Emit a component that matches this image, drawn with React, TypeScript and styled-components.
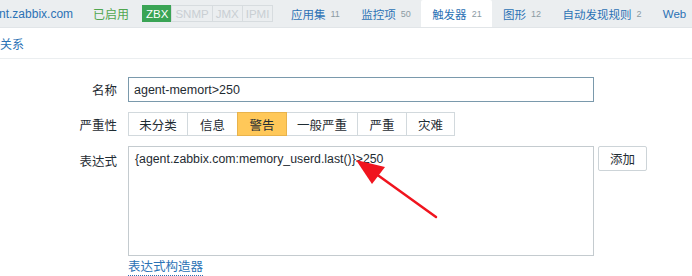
import React from 'react'
import styled, { createGlobalStyle } from 'styled-components'

const GlobalStyle = createGlobalStyle`
    html, body {
        margin: 0;
        padding: 0;
        background: #ffffff;
        overflow: hidden;
    }
    body {
        font-family: "Liberation Sans", Arial, "Noto Sans CJK SC", sans-serif;
        font-size: 12px;
        color: #1f2c33;
    }
`

const Page = styled.div`
    position: relative;
    width: 692px;
    height: 276px;
    overflow: hidden;
`

const HostBar = styled.div`
    display: flex;
    align-items: stretch;
    height: 27px;
    background: #ebeef0;
    border-bottom: 1px solid #e1e5e8;
    white-space: nowrap;
`

const HostName = styled.a`
    display: flex;
    align-items: center;
    margin-left: -21px;
    color: #2b72b5;
    font-size: 12px;
    text-decoration: none;
`

const Status = styled.span`
    display: flex;
    align-items: center;
    margin-left: 20px;
    color: #4fa64f;
    font-size: 12px;
`

const Badges = styled.div`
    display: flex;
    align-items: center;
    margin-left: 13px;
`

const Badge = styled.span<{ $on?: boolean }>`
    display: inline-flex;
    align-items: center;
    height: 15px;
    padding: 0 3px;
    font-size: 11.5px;
    border: 1px solid ${p => (p.$on ? '#3aa455' : '#d7dcdf')};
    background: ${p => (p.$on ? '#3aa455' : 'transparent')};
    color: ${p => (p.$on ? '#ffffff' : '#c9cfd3')};
    & + & {
        margin-left: -1px;
    }
`

const Tabs = styled.div`
    display: flex;
    margin-left: 7px;
`

const Tab = styled.a<{ $active?: boolean }>`
    display: flex;
    align-items: center;
    padding: 0 10.7px;
    color: #2b72b5;
    font-size: 11.5px;
    text-decoration: none;
    background: ${p => (p.$active ? '#ffffff' : 'transparent')};
    border-radius: 2px 2px 0 0;
    span {
        margin-left: 5px;
        font-size: 9px;
        color: #8c9ba3;
    }
`

const SubTabs = styled.div`
    display: flex;
    align-items: center;
    height: 30px;
    border-bottom: 1px solid #ebeef0;
    white-space: nowrap;
`

const SubTab = styled.a`
    margin-left: -24px;
    color: #2b72b5;
    font-size: 12px;
    text-decoration: none;
`

const Form = styled.div`
    display: grid;
    grid-template-columns: 117px 1fr;
    column-gap: 11px;
    row-gap: 10px;
    padding-top: 18px;
`

const Label = styled.div<{ $top?: boolean }>`
    display: flex;
    justify-content: flex-end;
    align-items: ${p => (p.$top ? 'flex-start' : 'center')};
    padding-top: ${p => (p.$top ? '5px' : '0')};
    font-size: 12.5px;
    color: #1f2c33;
`

const NameInput = styled.div`
    box-sizing: border-box;
    width: 466px;
    height: 25px;
    border: 1px solid #7a99ac;
    display: flex;
    align-items: center;
    padding-left: 5px;
    font-size: 12.5px;
    color: #1f2c33;
`

const Segments = styled.div`
    display: flex;
    height: 24px;
`

const Segment = styled.button<{ $w: number; $active?: boolean }>`
    box-sizing: border-box;
    width: ${p => p.$w}px;
    height: 24px;
    margin: 0 0 0 -1px;
    padding: 0;
    font-family: inherit;
    font-size: 12.5px;
    color: #1f2c33;
    border: 1px solid ${p => (p.$active ? '#e8b34c' : '#d2d9dd')};
    background: ${p => (p.$active ? '#ffc859' : '#ffffff')};
    position: ${p => (p.$active ? 'relative' : 'static')};
    &:first-child {
        margin-left: 0;
    }
`

const ExprRow = styled.div`
    display: flex;
    align-items: flex-start;
    gap: 4px;
`

const ExprColumn = styled.div`
    display: flex;
    flex-direction: column;
`

const ExprBox = styled.div`
    box-sizing: border-box;
    width: 466px;
    height: 110px;
    border: 1px solid #c4cbcf;
    padding: 5px 6px;
    font-size: 12.3px;
    color: #1f2c33;
`

const AddButton = styled.button`
    box-sizing: border-box;
    width: 49px;
    height: 25px;
    padding: 0;
    font-family: inherit;
    font-size: 12.5px;
    color: #1f2c33;
    background: #ffffff;
    border: 1px solid #cdd4d8;
    border-radius: 2px;
`

const BuilderLink = styled.a`
    align-self: flex-start;
    margin-top: 4px;
    color: #2b72b5;
    font-size: 12.5px;
    text-decoration: none;
    border-bottom: 1px dotted #2b72b5;
    line-height: 15px;
`

const Arrow = styled.svg`
    position: absolute;
    left: 0;
    top: 0;
    pointer-events: none;
`

const severities = [
    { id: 1, name: '未分类', w: 60 },
    { id: 2, name: '信息', w: 51 },
    { id: 3, name: '警告', w: 50, active: true },
    { id: 4, name: '一般严重', w: 72 },
    { id: 5, name: '严重', w: 50 },
    { id: 6, name: '灾难', w: 49 },
]

const tabs = [
    { id: 1, name: '应用集', count: '11' },
    { id: 2, name: '监控项', count: '50' },
    { id: 3, name: '触发器', count: '21', active: true },
    { id: 4, name: '图形', count: '12' },
    { id: 5, name: '自动发现规则', count: '2' },
    { id: 6, name: 'Web', count: '' },
]

const App = () => {
    return (
        <Page>
            <GlobalStyle />
            <HostBar>
                <HostName>agent.zabbix.com</HostName>
                <Status>已启用</Status>
                <Badges>
                    <Badge $on>ZBX</Badge>
                    <Badge>SNMP</Badge>
                    <Badge>JMX</Badge>
                    <Badge>IPMI</Badge>
                </Badges>
                <Tabs>
                    {tabs.map(t => (
                        <Tab key={t.id} $active={t.active}>
                            {t.name}
                            {t.count && <span>{t.count}</span>}
                        </Tab>
                    ))}
                </Tabs>
            </HostBar>
            <SubTabs>
                <SubTab>依赖关系</SubTab>
            </SubTabs>
            <Form>
                <Label>名称</Label>
                <NameInput>agent-memort&gt;250</NameInput>

                <Label>严重性</Label>
                <Segments>
                    {severities.map(s => (
                        <Segment key={s.id} $w={s.w} $active={s.active}>
                            {s.name}
                        </Segment>
                    ))}
                </Segments>

                <Label $top>表达式</Label>
                <ExprRow>
                    <ExprColumn>
                        <ExprBox>{'{agent.zabbix.com:memory_userd.last()}>250'}</ExprBox>
                        <BuilderLink>表达式构造器</BuilderLink>
                    </ExprColumn>
                    <AddButton>添加</AddButton>
                </ExprRow>
            </Form>
            <Arrow width="692" height="276" viewBox="0 0 692 276">
                <line x1="436" y1="217" x2="372" y2="171" stroke="#f0141e" strokeWidth="2.5" strokeLinecap="round" />
                <polygon points="356,160 385,167 372,184" fill="#f0141e" />
            </Arrow>
        </Page>
    )
}

export default App
